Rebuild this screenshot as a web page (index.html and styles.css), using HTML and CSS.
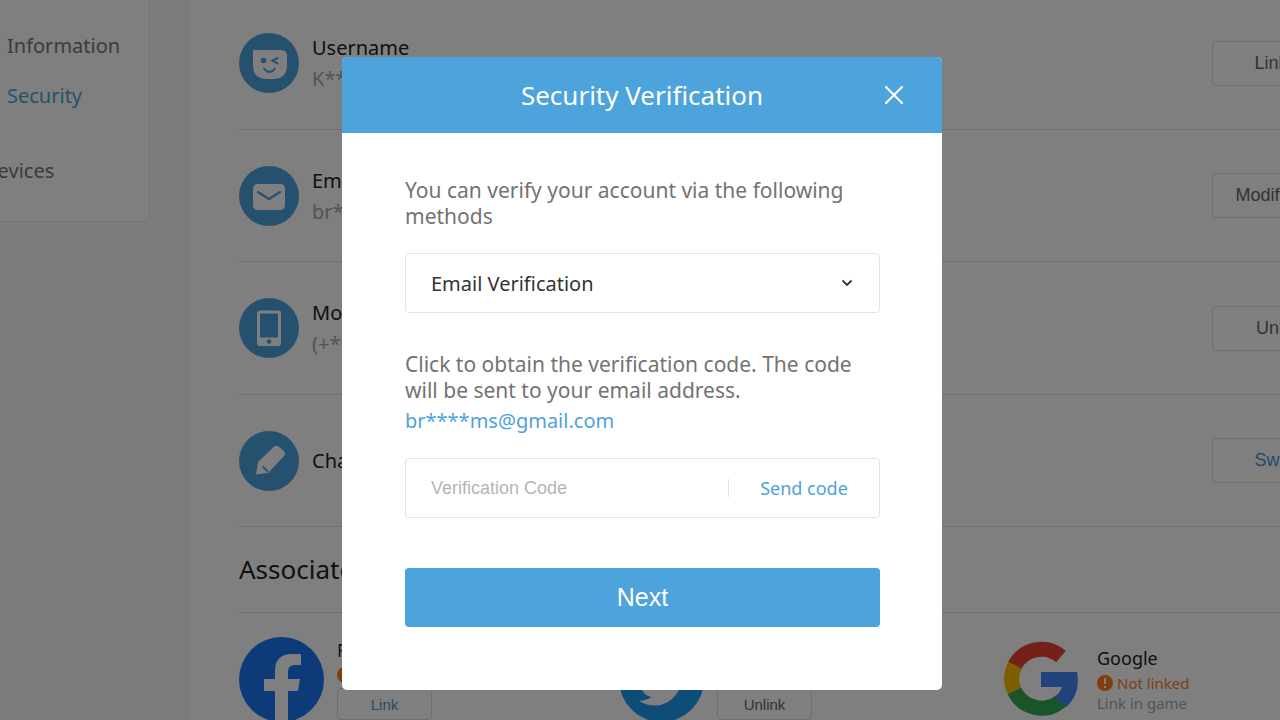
FILE: index.html
```html
<!DOCTYPE html>
<html lang="en">
<head>
<meta charset="utf-8">
<title>Security Verification</title>
<link rel="stylesheet" href="styles.css">
</head>
<body>
<div class="page">
  <nav class="sidebar">
    <a class="side-link" href="#info">Information</a>
    <a class="side-link active" href="#security">Security</a>
    <a class="side-link top-level" href="#devices">Devices</a>
  </nav>
  <main class="panel">
    <section class="row">
      <svg class="row-icon" viewBox="0 0 60 60"><circle cx="30" cy="30" r="30" fill="#4da3dc"/><path d="M14 17h28q6 0 6 6v9q0 14-14 14h-6q-14 0-14-14z" fill="#fff"/><circle cx="24.500" cy="27.500" r="2.800" fill="#4da3dc"/><path d="M38.500 25l-5 2.700 5 2.700M25 35.500q5.500 7 11 0" fill="none" stroke="#4da3dc" stroke-width="2" stroke-linecap="round"/></svg>
      <div class="row-text"><div class="row-title">Username</div><div class="row-sub">K****</div></div>
      <button class="row-btn" type="button">Linked</button>
    </section>
    <section class="row">
      <svg class="row-icon" viewBox="0 0 60 60"><circle cx="30" cy="30" r="30" fill="#4da3dc"/><rect x="14" y="18" width="32" height="26" rx="4.500" fill="#fff"/><path d="M19 26l11 7 11-7" fill="none" stroke="#4da3dc" stroke-width="2.200" stroke-linecap="round" stroke-linejoin="round"/></svg>
      <div class="row-text"><div class="row-title">Email</div><div class="row-sub">br****</div></div>
      <button class="row-btn" type="button">Modify now</button>
    </section>
    <section class="row">
      <svg class="row-icon" viewBox="0 0 60 60"><circle cx="30" cy="30" r="30" fill="#4da3dc"/><rect x="18" y="12.500" width="24" height="35.500" rx="3" fill="#fff"/><rect x="21" y="15.500" width="18" height="24" rx="1" fill="#4da3dc"/><circle cx="30" cy="43.500" r="2.300" fill="#4da3dc"/></svg>
      <div class="row-text"><div class="row-title">Mobile</div><div class="row-sub">(+**)</div></div>
      <button class="row-btn" type="button">Unlink</button>
    </section>
    <section class="row">
      <svg class="row-icon" viewBox="0 0 60 60"><circle cx="30" cy="30" r="30" fill="#4da3dc"/><path d="M17 43.500l2.300-13L35 15.800q2.500-2 4.800 0l5.200 4.400q2.200 2.300 0 4.800L30.500 40.500q-.8 1.200-2.500 1.500z" fill="#fff"/><path d="M23.500 35.500l5.500 5" stroke="#4da3dc" stroke-width="1.700"/></svg>
      <div class="row-text"><div class="row-title">Change</div></div>
      <button class="row-btn primary" type="button">Switch</button>
    </section>
    <h2 class="section-title">Associated Accounts</h2>
    <div class="accounts">
      <section class="account">
        <svg class="brand" viewBox="0 0 85 85"><circle cx="42.500" cy="42.500" r="42.500" fill="#1a74f0"/><path d="M36 85V54H25V42h11v-8q0-17 17-17h9v11h-6q-7 0-7 7v7h12l-2 12H49v31z" fill="#fff"/></svg>
        <div class="account-text"><div class="account-name">Facebook</div><div class="status"><svg class="warn" viewBox="0 0 16 16"><circle cx="8" cy="8" r="8" fill="#ff7a1c"/><path d="M8 3v6M8 11v2" stroke="#fff" stroke-width="2"/></svg>Not linked</div><button class="account-btn primary" type="button">Link</button></div>
      </section>
      <section class="account">
        <svg class="brand" viewBox="0 0 85 85"><circle cx="42.500" cy="42.500" r="42.500" fill="#1d9bee"/><path d="M66 30l-6 2q-8-8-15 0-3 4-2 8-14 0-24-12-4 8 4 15l-5-1q1 8 9 11h-4q2 5 9 7-3 3-12 4 18 10 33-2 10-9 10-24z" fill="#fff"/></svg>
        <div class="account-text"><div class="account-name">Twitter</div><div class="status">Linked</div><button class="account-btn" type="button">Unlink</button></div>
      </section>
      <section class="account compact">
        <svg class="brand" viewBox="-5 -4 85 85"><g fill="none" stroke-width="15"><path d="M57 15.500A30 30 0 0 0 10.500 25" stroke="#ea4335"/><path d="M11 24A30 30 0 0 0 11 51" stroke="#fbbc05"/><path d="M10.500 50A30 30 0 0 0 57 60" stroke="#34a853"/></g><path d="M37 31H73q4 22-11 35L50 56q6-4 8-10H37z" fill="#4285f4"/></svg>
        <div class="account-text"><div class="account-name">Google</div><div class="status"><svg class="warn" viewBox="0 0 16 16"><circle cx="8" cy="8" r="8" fill="#ff7a1c"/><path d="M8 3v6M8 11v2" stroke="#fff" stroke-width="2"/></svg>Not linked</div><div class="hint">Link in game</div></div>
      </section>
    </div>
  </main>
</div>
<div class="overlay">
  <form class="modal" role="dialog" aria-labelledby="modal-title">
    <header class="modal-head">
      <h1 class="modal-title" id="modal-title">Security Verification</h1>
      <button class="close" type="button" aria-label="Close"><svg class="close-icon" viewBox="0 0 18 18"><path d="M1 1l16 16M17 1L1 17" stroke="#fff" stroke-width="2.200" stroke-linecap="round"/></svg></button>
    </header>
    <div class="modal-body">
      <label class="para" for="method">You can verify your account via the following methods</label>
      <div class="select-box">
        <select class="select" id="method"><option>Email Verification</option></select>
        <svg class="chevron" viewBox="0 0 12 8"><path d="M1.500 1.500L6 6l4.500-4.500" fill="none" stroke="#333" stroke-width="1.800"/></svg>
      </div>
      <label class="para" for="code">Click to obtain the verification code. The code will be sent to your email address.</label>
      <div class="email">br****ms@gmail.com</div>
      <div class="code-box">
        <input class="code-input" id="code" type="text" placeholder="Verification Code">
        <button class="send" type="button">Send code</button>
      </div>
      <button class="next" type="submit">Next</button>
    </div>
  </form>
</div>
</body>
</html>
```

FILE: styles.css
```css
* { box-sizing: border-box; }
body {
  margin: 0;
  height: 100vh;
  overflow: hidden;
  background: #f8f8fa;
  font-family: "Noto Sans", "Open Sans", sans-serif;
  color: #222;
}
button, input, select { font-family: "Liberation Sans", Arial, sans-serif; }

/* The account page runs past both window edges behind the dialog. */
.page {
  display: flex;
  align-items: flex-start;
  gap: 38px;
  margin: -3px -120px 0 -80px;
}
.sidebar {
  flex: 0 0 230px;
  display: flex;
  flex-direction: column;
  padding: 23px 0 25px 86px;
  background: #fff;
  border: 1px solid #e6e6e6;
  border-radius: 0 0 6px 6px;
}
.side-link {
  font-size: 20px;
  line-height: 50px;
  color: #777;
  text-decoration: none;
}
.side-link.active { color: #4da3dc; }
.side-link.top-level { margin: 25px 0 0 -24px; }
.panel {
  flex: 1;
  min-width: 0;
  padding: 0 50px;
  background: #fff;
  border-left: 1px solid #e6e6e6;
}
.row {
  display: flex;
  align-items: center;
  gap: 13px;
  height: 132px;
  border-bottom: 1px solid #dedede;
}
.row:nth-child(odd) { height: 133px; }
.row-icon { width: 60px; height: 60px; flex: none; }
.row-text { flex: 1; font-size: 20px; line-height: 31px; }
.row-sub { color: #a6a6a6; }
.row-btn, .account-btn {
  background: none;
  border: 1px solid #dcdcdc;
  border-radius: 4px;
  color: #666;
}
.row-btn { width: 138px; height: 45px; font-size: 18px; padding: 0; }
.row-btn.primary, .account-btn.primary { color: #4b94cf; }
.section-title {
  margin: 0;
  font-size: 26px;
  font-weight: 400;
  line-height: 85px;
  border-bottom: 1px solid #dedede;
}
.accounts { display: flex; }
.account { flex: 0 0 380px; display: flex; gap: 13px; padding: 24px 0; }
.brand { width: 85px; height: 85px; flex: none; }
.account-name { font-size: 18px; line-height: 26px; }
.compact .account-text { padding-top: 8px; }
.status {
  display: flex;
  align-items: center;
  gap: 4px;
  font-size: 15px;
  line-height: 24px;
  color: #ff7a1c;
}
.warn { width: 16px; height: 16px; }
.hint { font-size: 15px; line-height: 16px; color: #a6a6a6; }
.account-btn { width: 95px; height: 32px; margin-top: 1px; font-size: 15px; }

.overlay {
  position: fixed;
  inset: 0;
  display: flex;
  justify-content: center;
  align-items: flex-start;
  padding: 57px 0 0 4px;
  background: rgba(0, 0, 0, 0.5);
}
.modal {
  width: 600px;
  background: #fff;
  border-radius: 5px;
  overflow: hidden;
}
.modal-head {
  display: grid;
  grid-template-columns: 96px 1fr 96px;
  align-items: center;
  height: 76px;
  background: #4da3dc;
}
.modal-title {
  grid-column: 2;
  margin: 0;
  font-size: 26px;
  font-weight: 400;
  text-align: center;
  color: #fff;
}
.close {
  justify-self: center;
  display: flex;
  padding: 8px;
  background: none;
  border: 0;
}
.close-icon { width: 18px; height: 18px; }
.modal-body {
  display: flex;
  flex-direction: column;
  padding: 44px 62px 63px 63px;
}
.para, .email { line-height: 26px; }
.para { font-size: 21px; color: #737373; }
.select-box {
  display: grid;
  align-items: center;
  margin: 24px 0 38px;
}
.select, .chevron { grid-area: 1 / 1; }
.select {
  appearance: none;
  height: 60px;
  padding: 0 25px;
  background: #fff;
  border: 1px solid #e3e3e3;
  border-radius: 4px;
  font-family: "Noto Sans", "Open Sans", sans-serif;
  font-size: 20px;
  color: #333;
}
.chevron {
  justify-self: end;
  width: 12px;
  height: 8px;
  margin-right: 27px;
  pointer-events: none;
}
.email { margin: 5px 0 24px; font-size: 20px; color: #4da3dc; }
.code-box {
  display: flex;
  align-items: center;
  height: 60px;
  border: 1px solid #e3e3e3;
  border-radius: 4px;
}
.code-input {
  flex: 1;
  min-width: 0;
  padding: 0 25px;
  border: 0;
  font-size: 18px;
  outline: 0;
}
.code-input::placeholder { color: #b5b5b5; }
.send {
  width: 151px;
  padding: 0;
  background: none;
  border: 0;
  border-left: 1px solid #e3e3e3;
  font-family: "Noto Sans", "Open Sans", sans-serif;
  font-size: 18px;
  line-height: 18px;
  color: #4da3dc;
}
.next {
  height: 59px;
  margin-top: 50px;
  background: #4da3dc;
  border: 0;
  border-radius: 4px;
  font-size: 25px;
  color: #fff;
}
```
